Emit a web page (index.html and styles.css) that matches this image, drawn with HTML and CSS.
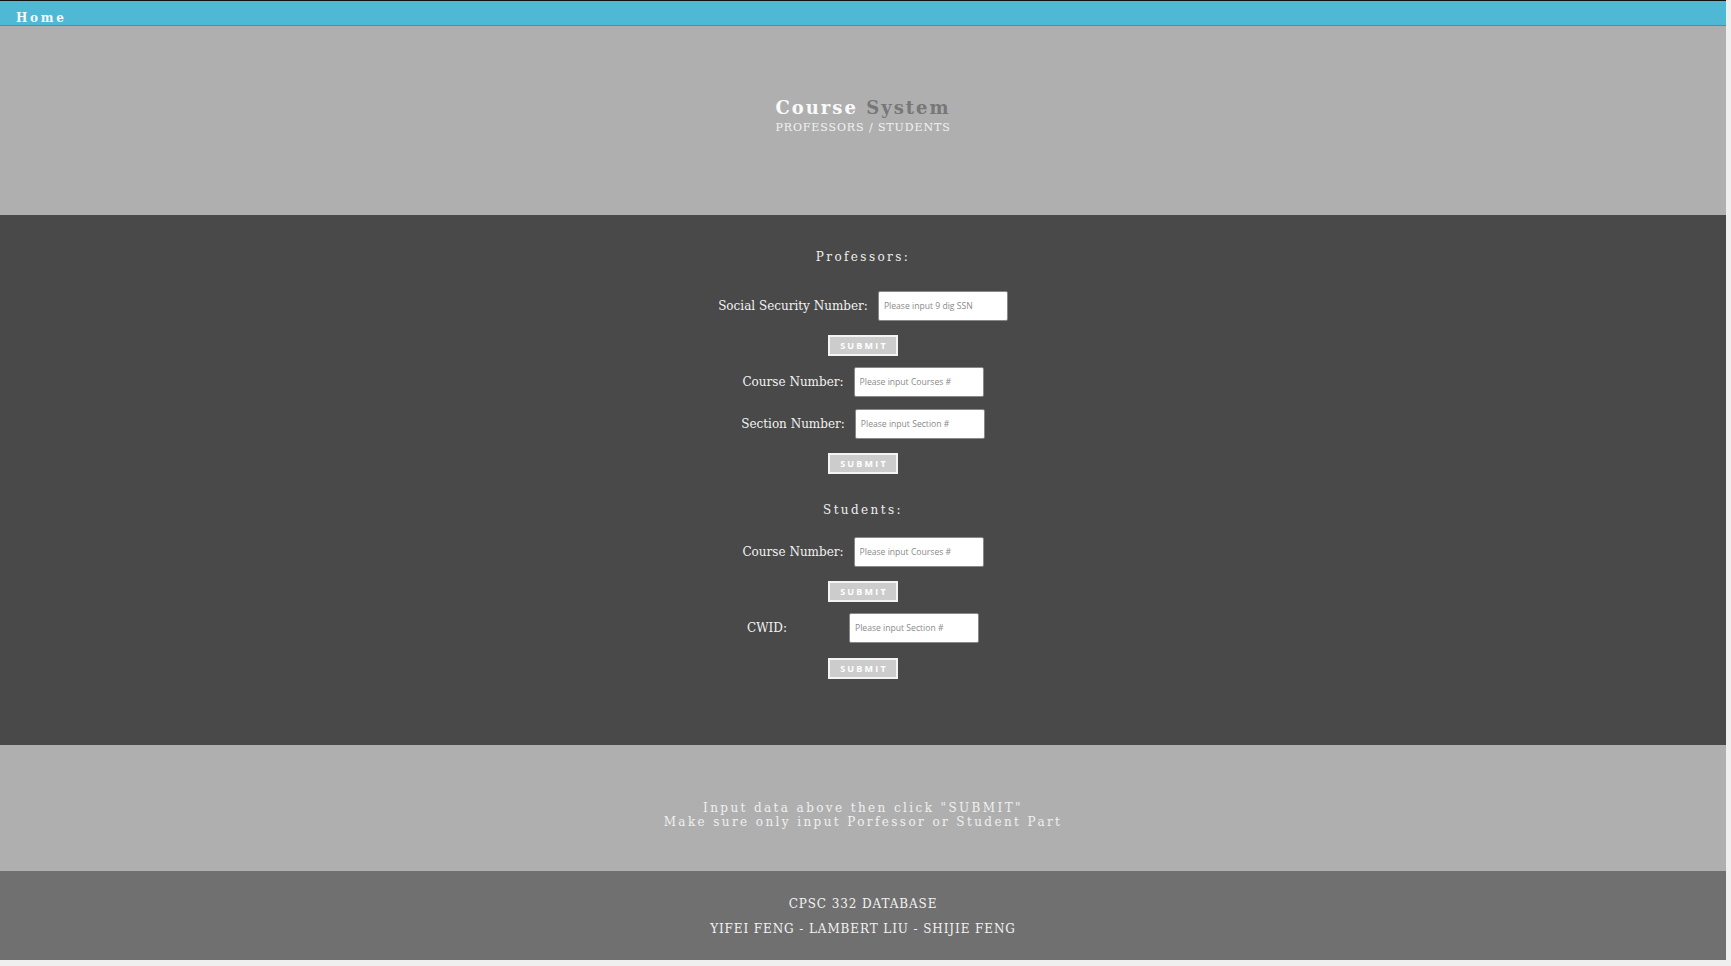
FILE: index.html
```html
<!DOCTYPE html>
<html>
<head>
<meta charset="utf-8">
<title>Course System</title>
<link rel="stylesheet" href="styles.css">
</head>
<body>
<div class="page">
  <nav class="nav"><a class="nav-home" href="#">Home</a></nav>
  <header class="hero">
    <h1 class="hero-title">Course <span class="hero-title-muted">System</span></h1>
    <p class="hero-sub">PROFESSORS / STUDENTS</p>
  </header>
  <main class="main">
    <h2 class="section-title section-title-prof">Professors:</h2>
    <form class="row row-ssn"><label class="row-label">Social Security Number:</label><input class="row-input" type="text" placeholder="Please input 9 dig SSN"></form>
    <button class="submit submit-1" type="button">SUBMIT</button>
    <form class="row row-course"><label class="row-label">Course Number:</label><input class="row-input" type="text" placeholder="Please input Courses #"></form>
    <form class="row row-section"><label class="row-label">Section Number:</label><input class="row-input" type="text" placeholder="Please input Section #"></form>
    <button class="submit submit-2" type="button">SUBMIT</button>
    <h2 class="section-title section-title-stu">Students:</h2>
    <form class="row row-course2"><label class="row-label">Course Number:</label><input class="row-input" type="text" placeholder="Please input Courses #"></form>
    <button class="submit submit-3" type="button">SUBMIT</button>
    <form class="row row-cwid"><label class="row-label row-label-cwid">CWID:</label><input class="row-input" type="text" placeholder="Please input Section #"></form>
    <button class="submit submit-4" type="button">SUBMIT</button>
  </main>
  <section class="notes">
    <p class="notes-line">Input data above then click "SUBMIT"</p>
    <p class="notes-line">Make sure only input Porfessor or Student Part</p>
  </section>
  <footer class="footer">
    <p class="footer-line footer-line-1">CPSC 332 DATABASE</p>
    <p class="footer-line footer-line-2">YIFEI FENG - LAMBERT LIU - SHIJIE FENG</p>
  </footer>
</div>
</body>
</html>
```
FILE: styles.css
```css
html, body {
  margin: 0;
  padding: 0;
}
body {
  background: #efefef;
  font-family: "DejaVu Serif", serif;
  width: 1731px;
  height: 966px;
  overflow: hidden;
}
.page {
  margin-right: 5px;
  border-top: 1px solid #111;
}
.nav {
  height: 24px;
  background: #4fb8d5;
  border-bottom: 1px solid #3f93ab;
  display: flex;
  align-items: flex-start;
  padding-left: 16px;
  box-sizing: content-box;
}
.nav-home {
  color: #f4f8fa;
  font-weight: bold;
  font-size: 12px;
  line-height: 14px;
  letter-spacing: 2.7px;
  text-decoration: none;
  margin-top: 10px;
}
.hero {
  height: 189px;
  background: #afafaf;
  display: flex;
  flex-direction: column;
  align-items: center;
  padding-top: 71px;
  box-sizing: border-box;
}
.hero-title {
  margin: 0;
  font-size: 18px;
  line-height: 22px;
  letter-spacing: 2px;
  color: #fafafa;
  font-weight: bold;
}
.hero-title-muted {
  color: #777;
}
.hero-sub {
  margin: 2px 0 0;
  font-size: 11px;
  line-height: 14px;
  letter-spacing: 0.9px;
  color: #f2f2f2;
}
.main {
  height: 530px;
  background: #494949;
  box-sizing: border-box;
  padding-top: 35px;
  display: flex;
  flex-direction: column;
  align-items: center;
}
.section-title {
  margin: 0;
  font-size: 12px;
  line-height: 14px;
  font-weight: normal;
  letter-spacing: 2.4px;
  color: #eee;
}
.section-title-stu { margin-top: 29px; }
.row {
  margin: 0;
  display: flex;
  align-items: center;
  gap: 10px;
  height: 30px;
}
.row-ssn { margin-top: 27px; }
.row-course { margin-top: 11px; }
.row-section { margin-top: 12px; }
.row-course2 { margin-top: 20px; }
.row-cwid { margin-top: 11px; }
.row-label {
  color: #f2f2f2;
  font-size: 12px;
}
.row-label-cwid {
  width: 92px;
}
.row-input {
  width: 130px;
  height: 30px;
  box-sizing: border-box;
  border: 1px solid #888;
  border-radius: 2px;
  background: #fff;
  padding: 0 5px;
  font-family: "Open Sans", sans-serif;
  font-size: 8.6px;
  font-stretch: 88%;
  color: #555;
}
.row-input::placeholder {
  color: #8a8a8a;
}
.submit {
  width: 70px;
  height: 21px;
  box-sizing: border-box;
  background: #cccccc;
  border: 2px solid #f4f4f4;
  color: #fff;
  font-family: "Open Sans", sans-serif;
  font-weight: bold;
  font-size: 9px;
  letter-spacing: 2.2px;
  padding: 0 0 0 2px;
  margin: 0;
}
.submit-1 { margin-top: 14px; }
.submit-2 { margin-top: 14px; }
.submit-3 { margin-top: 14px; }
.submit-4 { margin-top: 15px; }
.notes {
  height: 126px;
  background: #afafaf;
  box-sizing: border-box;
  padding-top: 56px;
  text-align: center;
}
.notes-line {
  margin: 0;
  font-size: 12px;
  line-height: 14px;
  letter-spacing: 2.4px;
  color: #f0f0f0;
}
.footer {
  height: 89px;
  background: #707070;
  box-sizing: border-box;
  padding-top: 21px;
  text-align: center;
}
.footer-line {
  margin: 0;
  font-size: 12px;
  line-height: 25px;
  letter-spacing: 0.9px;
  color: #f2f2f2;
}
```
